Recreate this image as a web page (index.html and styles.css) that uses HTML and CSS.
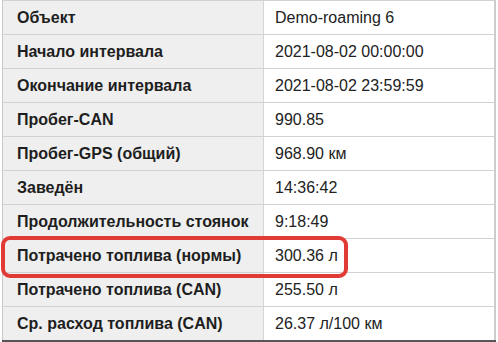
FILE: index.html
```html
<!DOCTYPE html>
<html lang="ru">
<head>
<meta charset="utf-8">
<link rel="stylesheet" href="styles.css">
</head>
<body>
<div class="wrap">
<table class="info">
<tr><th>Объект</th><td>Demo-roaming 6</td></tr>
<tr><th>Начало интервала</th><td>2021-08-02 00:00:00</td></tr>
<tr><th>Окончание интервала</th><td>2021-08-02 23:59:59</td></tr>
<tr><th>Пробег-CAN</th><td>990.85</td></tr>
<tr><th>Пробег-GPS (общий)</th><td>968.90 км</td></tr>
<tr><th>Заведён</th><td>14:36:42</td></tr>
<tr><th>Продолжительность стоянок</th><td>9:18:49</td></tr>
<tr><th>Потрачено топлива (нормы)</th><td>300.36 л</td></tr>
<tr><th>Потрачено топлива (CAN)</th><td>255.50 л</td></tr>
<tr><th>Ср. расход топлива (CAN)</th><td>26.37 л/100 км</td></tr>
</table>
<div class="highlight"></div>
</div>
</body>
</html>
```
FILE: styles.css
```css
html, body {
  margin: 0;
  padding: 0;
  background: #ffffff;
}
body {
  font-family: "Liberation Sans", Arial, sans-serif;
  font-size: 16px;
  color: #222222;
}
.wrap {
  position: relative;
  padding-left: 2px;
}
.info {
  border-collapse: collapse;
  width: 494px;
  table-layout: fixed;
  border-left: 1px solid #c8c8c8;
  border-right: 2px solid #cccccc;
  border-bottom: 2px solid #555555;
}
.info th, .info td {
  height: 33px;
  padding: 0 0 0 14px;
  border-top: 1px solid #d2d2d2;
  text-align: left;
  vertical-align: middle;
  white-space: nowrap;
}
.info th {
  width: 246px;
  background: #efefef;
  font-weight: bold;
  color: #1e1e1e;
  border-right: 1px solid #d6d6d6;
}
.info td {
  padding-left: 11px;
  background: #ffffff;
}
.highlight {
  position: absolute;
  left: 1px;
  top: 236px;
  width: 339px;
  height: 34px;
  border: 4px solid #e23b36;
  border-radius: 9px;
}
```
